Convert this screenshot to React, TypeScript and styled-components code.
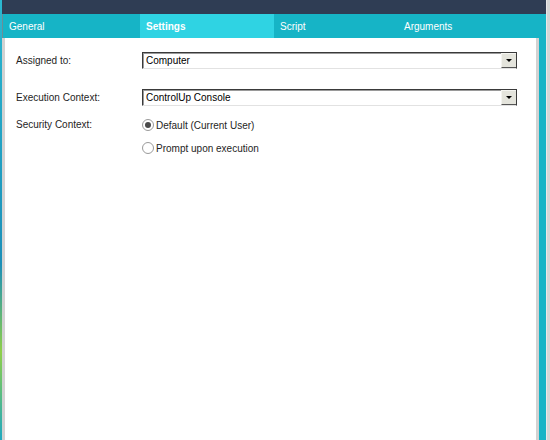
import React from "react";
import styled, { createGlobalStyle } from "styled-components";

const Global = createGlobalStyle`
  html, body { margin: 0; padding: 0; }
  body { font-family: "Liberation Sans", Arial, sans-serif; }
`;

const Page = styled.div`
  width: 550px;
  height: 440px;
  display: flex;
  background: #1aa5c2;
  overflow: hidden;
`;

const LeftEdge = styled.div`
  width: 2px;
  background: linear-gradient(#2bb8d0, #1c8fb8 60%, #8fcf4a 80%, #20a8c0);
`;

const Window = styled.div`
  width: 544px;
  display: flex;
  flex-direction: column;
  background: #16b4c6;
`;

const RightEdge = styled.div`
  flex: 1;
  background: #d6d6d6;
  border-left: 1px solid #e9e9e9;
`;

const TitleBar = styled.div`
  height: 14px;
  background: #2f3d54;
`;

const TabBar = styled.div`
  height: 24px;
  display: flex;
  background: #16b4c6;
  width: 537px;
  border-left: 1px solid #6a8e98;
  box-sizing: border-box;
`;

const Tab = styled.div<{ $active?: boolean; $width: number }>`
  width: ${(p) => p.$width}px;
  box-sizing: border-box;
  padding-left: 6px;
  display: flex;
  align-items: center;
  color: #ffffff;
  font-size: 10px;
  font-weight: ${(p) => (p.$active ? 600 : 400)};
  background: ${(p) => (p.$active ? "#2fd3e3" : "transparent")};
`;

const BodyRow = styled.div`
  flex: 1;
  display: flex;
`;

const Panel = styled.div`
  width: 537px;
  box-sizing: border-box;
  background: #ffffff;
  border-left: 3px solid #d2d2d2;
  border-right: 3px solid #d2d2d2;
  padding: 14px 0 0 11px;
  display: flex;
  flex-direction: column;
`;

const FormRow = styled.div<{ $mt?: number; $top?: boolean }>`
  display: flex;
  align-items: ${(p) => (p.$top ? "flex-start" : "center")};
  margin-top: ${(p) => p.$mt ?? 0}px;
`;

const Label = styled.div`
  width: 126px;
  font-size: 10px;
  line-height: 14px;
  color: #1e1e1e;
`;

const Select = styled.div`
  width: 375px;
  height: 17px;
  box-sizing: border-box;
  display: flex;
  align-items: stretch;
  border-top: 1px solid #3a3a3a;
  border-left: 1px solid #3a3a3a;
  border-right: 1px solid #3a3a3a;
  border-bottom: 1px solid #e2e2e2;
  box-shadow: inset 1px 1px 0 #9a9a9a;
  background: #ffffff;
`;

const SelectText = styled.div`
  flex: 1;
  padding-left: 3px;
  display: flex;
  align-items: center;
  font-size: 10px;
  color: #000;
`;

const DropButton = styled.div`
  width: 15px;
  box-sizing: border-box;
  background: #e4e4dc;
  border-top: 1px solid #f4f4f0;
  border-left: 1px solid #f4f4f0;
  border-bottom: 1px solid #555;
  display: flex;
  align-items: center;
  justify-content: center;
`;

const Arrow = styled.div`
  width: 0;
  height: 0;
  border-left: 3px solid transparent;
  border-right: 3px solid transparent;
  border-top: 3px solid #000;
`;

const RadioGroup = styled.div`
  display: flex;
  flex-direction: column;
  gap: 9px;
`;

const RadioItem = styled.div`
  display: flex;
  align-items: center;
  height: 14px;
  font-size: 10px;
  color: #1e1e1e;
`;

const RadioCircle = styled.div<{ $checked?: boolean }>`
  width: 12px;
  height: 12px;
  box-sizing: border-box;
  border-radius: 50%;
  border: 1px solid #9a9a9a;
  background: #fff;
  margin-right: 2px;
  display: flex;
  align-items: center;
  justify-content: center;
  &::after {
    content: "";
    display: ${(p) => (p.$checked ? "block" : "none")};
    width: 6px;
    height: 6px;
    border-radius: 50%;
    background: #4a4a4a;
  }
`;

const Filler = styled.div`
  flex: 1;
  background: #16b4c6;
`;

const tabs = [
  { name: "General", width: 137 },
  { name: "Settings", width: 134, active: true },
  { name: "Script", width: 124 },
  { name: "Arguments", width: 141 },
];

export default function App() {
  return (
    <>
      <Global />
      <Page>
        <LeftEdge />
        <Window>
          <TitleBar />
          <TabBar>
            {tabs.map((t) => (
              <Tab key={t.name} $active={t.active} $width={t.width}>
                {t.name}
              </Tab>
            ))}
          </TabBar>
          <BodyRow>
            <Panel>
              <FormRow>
                <Label>Assigned to:</Label>
                <Select>
                  <SelectText>Computer</SelectText>
                  <DropButton>
                    <Arrow />
                  </DropButton>
                </Select>
              </FormRow>
              <FormRow $mt={20}>
                <Label>Execution Context:</Label>
                <Select>
                  <SelectText>ControlUp Console</SelectText>
                  <DropButton>
                    <Arrow />
                  </DropButton>
                </Select>
              </FormRow>
              <FormRow $mt={12} $top>
                <Label>Security Context:</Label>
                <RadioGroup>
                  <RadioItem>
                    <RadioCircle $checked />
                    Default (Current User)
                  </RadioItem>
                  <RadioItem>
                    <RadioCircle />
                    Prompt upon execution
                  </RadioItem>
                </RadioGroup>
              </FormRow>
            </Panel>
            <Filler />
          </BodyRow>
        </Window>
        <RightEdge />
      </Page>
    </>
  );
}
